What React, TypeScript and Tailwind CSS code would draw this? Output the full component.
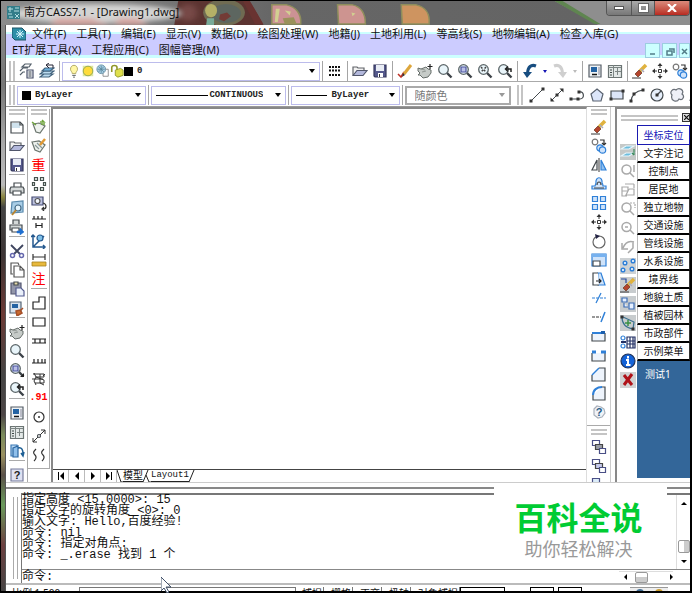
import React from "react";
import type { ReactNode } from "react";

const K = "#444a4e";
const B = "#2f80d8";
const L = "#cfe3fa";

function Svg({ children, w = 16, h = 16 }: { children: ReactNode; w?: number; h?: number }) {
  return (
    <svg width={w} height={h} viewBox={`0 0 ${w} ${h}`} fill="none" stroke={K} strokeWidth={1.2} aria-hidden="true" className="block shrink-0">
      {children}
    </svg>
  );
}

const lens = (
  <>
    <path d="M10 10l4.500 4.500" stroke="#3c4248" strokeWidth={2.4} />
    <circle cx="6.500" cy="6.500" r="4.800" fill="#e9f5fa" stroke="#5b6568" strokeWidth={1.300} />
  </>
);
const hand = (
  <>
    <path d="M1 5l3 1 5-2 2 2 3 1v3l-3 4-5 1-3-3H1l2-2-2-2z" fill="#c6cbc8" stroke="#676e6b" strokeWidth={1} />
    <path d="M4 6l4 1M5 9l4-1" stroke="#858c88" strokeWidth={0.800} />
  </>
);
const four = <path d="M13 1v5M10.500 3.500h5" stroke="#222" />;
const brush = (
  <>
    <path d="M14 2L8 8" stroke="#e0b23e" strokeWidth={3.500} />
    <path d="M9 6l3 3" stroke="#aab" strokeWidth={1.500} />
    <path d="M3 11l4-4 3 3-4 4z" fill="#b5442c" stroke="#71402c" strokeWidth={0.800} />
    <path d="M0 15h9" stroke="#555" />
  </>
);
const floppy = (
  <>
    <path d="M2 2h12v12H3l-1-1z" fill="#55598c" stroke="#34375c" />
    <path d="M4 2h8v6H4z" fill="#e8ecf4" stroke="none" />
    <path d="M6 10h5v4H6z" fill="#fff" stroke="none" />
    <path d="M7 11h1v3H7z" fill="#333" stroke="none" />
  </>
);
const folder = (
  <>
    <path d="M1 12V4h4l1 1h6v2" fill="#f2f2f2" stroke="#62656a" />
    <path d="M1 12.500l4-5h10l-4 5z" fill="#b3b8dc" stroke="#51566b" />
  </>
);
const palette = (
  <>
    <path d="M2 2h12v12H2z" fill="#eef2f5" stroke="#555d66" />
    <path d="M4 4h6v5H4z" fill="#2463a3" stroke="none" />
    <path d="M12 4v8" stroke="#99a" />
    <path d="M5 11.500h5" stroke="#111" strokeWidth={1.500} />
  </>
);
const design = (
  <>
    <path d="M1.500 2.500h13v12h-13z" fill="#e3e8e7" stroke="#6c7574" />
    <path d="M6.500 2v12M1 4.500h13M8 8.500h6M10.500 5v7" stroke="#7c8584" strokeWidth={1} />
    <path d="M3 7h2M3 9.500h2M3 12h2" stroke="#3a4443" />
  </>
);
const node = (x: number, y: number) => <rect x={x - 1.500} y={y - 1.500} width="3" height="3" fill="#333" stroke="none" />;
const moveIcon = (
  <>
    <path d="M8 0l2.500 3h-5zM8 16l2.500-3h-5zM0 8l3-2.500v5zM16 8l-3-2.500v5z" fill="#333" stroke="none" />
    <path d="M8 2v3M8 11v3M2 8h3M11 8h3M6.500 6.500h3v3h-3z" stroke="#333" strokeWidth={1} />
  </>
);
const copyIcon = (
  <>
    <circle cx="4" cy="4" r="2.800" fill="#fff" stroke="#777" />
    <path d="M9 2h4v4M11 5l2 2 2-2" stroke="#333" />
    <circle cx="9" cy="10" r="3.200" fill={L} stroke={B} />
    <circle cx="11.500" cy="12" r="3.200" fill={L} stroke={B} />
  </>
);
const zoomPrev = (
  <>
    {lens}
    <path d="M14 9V6H9M11 3.500L8.500 6 11 8.500" stroke="#222" strokeWidth={1.500} />
  </>
);
const zoomWin = (
  <>
    {lens}
    <path d="M4 4h5v5H4z" fill="#b9bfe8" stroke="#4b539b" />
  </>
);
const order = (a: string, b: string) => (
  <>
    <path d="M1.500 1.500h7v5h-7z" fill={a} stroke="#4a4f86" />
    <path d="M4.500 5.500h7v5h-7z" fill={b} stroke="#444" />
    <path d="M8.500 9.500h6v5h-6z" fill={a} stroke="#4a4f86" />
  </>
);

const icons: Record<string, ReactNode> = {
  layers: (
    <>
      <path d="M3 4l3-3h6l-2 3zM1 8l3-3h5M1 12l3-3h2" stroke="#55606b" />
      <path d="M8 7h6v8H8z" fill="#edf0f7" stroke="#495069" />
      <path d="M9.500 9h3M9.500 11h3M9.500 13h3" />
    </>
  ),
  layerPrev: (
    <>
      <path d="M1 14l4-3h9l-4 3zM1 11l4-3h10l-4 3z" fill="#bcdcf0" stroke="#42627c" />
      <path d="M3 8l3-3h9l-4 3z" fill="#6db0dc" stroke="#42627c" />
      <path d="M14 5V2H8M10 0L7 2l3 3" stroke="#223" strokeWidth={1} />
    </>
  ),
  linetype: <path d="M2 4h12M2 7.500h12M2 12h12" stroke="#111" strokeWidth={2} strokeDasharray="2 1" />,
  folder,
  floppy,
  pencil: (
    <>
      <path d="M1 11l3 3 3-5" stroke="#bd2f24" strokeWidth={1.500} />
      <path d="M14 2L7 11" stroke="#dda63c" strokeWidth={3} />
      <path d="M8 12l-3 2 1-4z" fill="#333" stroke="none" />
    </>
  ),
  pan: <>{hand}{four}</>,
  lens,
  zoomWin,
  zoomExt: <>{lens}<path d="M4 4l5 5M9 4L4 9" stroke="#444" strokeWidth={1.500} strokeDasharray="2 2" /></>,
  zoomPrev,
  undo: (
    <>
      <path d="M14 3C9 1 6 4 5.500 10" stroke="#174d80" strokeWidth={3} />
      <path d="M1 9h9l-5 6z" fill="#174d80" stroke="none" />
    </>
  ),
  redo: (
    <>
      <path d="M2 3c5-2 8 1 8.500 7" stroke="#cfcfcf" strokeWidth={3} />
      <path d="M6 9h9l-4 6z" fill="#cfcfcf" stroke="none" />
    </>
  ),
  palette,
  design,
  erase: brush,
  move: moveIcon,
  copy: copyIcon,
  line: <><path d="M2 14L14 2" strokeWidth={1} />{node(2, 14)}{node(14, 2)}</>,
  xline: <><path d="M2 14L14 2" strokeWidth={1} /><path d="M14.500 1.500v4l-4-4zM1.500 14.500v-4l4 4z" fill="#333" stroke="none" />{node(8, 8)}</>,
  pline: <><path d="M1 12h10c5 0 4-8 0-7" />{node(2, 12)}{node(9, 12)}{node(10, 5)}</>,
  polygon: <path d="M8 2l6 5-2 7H4L2 7z" fill="#dce6fa" stroke="#5a6370" />,
  rect: <><path d="M2 4h12v8H2z" fill="#dbe5f8" />{node(2, 12)}{node(14, 4)}</>,
  arc: <><path d="M2 14C3 7 7 4 14 3" />{node(2, 14)}{node(5, 7)}{node(14, 3)}</>,
  circle: <><circle cx="8" cy="8" r="6" fill="#e6effb" /><path d="M8 8l4-4" />{node(8, 8)}</>,
  cloud: <path d="M3 8c-3-3 1-7 4-5 3-3 9 0 6 4 3 2 1 7-3 5-2 4-9 2-7-4z" fill="#eef0f7" stroke="#6a7078" />,
  spline: <path d="M1 14C5 0 9 16 14 3" />,
  newDoc: (
    <>
      <path d="M2 3h9l3 3v8H2z" fill="#fff" />
      <path d="M3 4h8v5H3z" fill="#cfe2ed" stroke="none" />
      <path d="M11 3v3h3" />
    </>
  ),
  print: (
    <>
      <path d="M5 6V2h7v4" fill="#fff" />
      <path d="M2 6h12l1 2v4H1V8z" fill="#d6dada" />
      <path d="M4 10h8v4H4z" fill="#fff" />
    </>
  ),
  preview: (
    <>
      <path d="M3 2l11-1v11l-12 1z" fill="#a8cde6" stroke="#5788ab" />
      <circle cx="9" cy="8" r="3" fill="#e5f5fd" stroke="#456b86" />
      <path d="M7 10l-4 5" stroke="#b88431" strokeWidth={2} />
    </>
  ),
  plot: (
    <>
      <path d="M4 5V1h6v4M1 6h12v5H1z" fill="#d4d8d8" />
      <path d="M3 9h7v4H3z" fill="#fff" />
      <path d="M8 12h3v-3l4 4-4 3v-2H8z" fill="#1e6fd0" stroke="#1e6fd0" strokeWidth={0.500} />
    </>
  ),
  cut: (
    <>
      <path d="M2 2l9 9M14 2l-9 9" stroke="#3f4660" strokeWidth={1.800} />
      <circle cx="3.500" cy="12.500" r="2" stroke="#6668ad" strokeWidth={1.500} />
      <circle cx="12.500" cy="12.500" r="2" stroke="#6668ad" strokeWidth={1.500} />
    </>
  ),
  copyDoc: <path d="M4 12H2V1h7l1 2M5 4h6l4 4v7H5zM11 4v4h4" fill="#fff" stroke="#555" />,
  paste: (
    <>
      <path d="M2 2h10v11H2z" fill="#9296a9" stroke="#555972" />
      <path d="M5 1h4v3H5z" fill="#e3d8a8" />
      <path d="M7 7h5l3 3v5H7z" fill="#eaf0fa" stroke="#555c90" />
    </>
  ),
  match: (
    <>
      <path d="M1 2h11v11H1z" fill="#d8e4ef" stroke="#556575" />
      <path d="M3 4h6v4H3z" fill="#2463a3" stroke="none" />
      <path d="M14 8l-3 3M7 11l4-1 2 3-5 3z" fill="#ca6b30" stroke="#a75028" strokeWidth={1.500} />
    </>
  ),
  zoomDyn: <>{zoomWin}<path d="M11 15h4v-4z" fill="#222" stroke="none" /></>,
  tool: (
    <>
      <path d="M2 2h6v11H2z" fill="#b9d8f2" stroke="#3a78b5" />
      <path d="M4 5l5-2v11H4z" fill="#8fbfeb" stroke="#2b65a0" />
      <path d="M9 5c4-1 5 2 5 6M12 10l2 3 1-4" stroke="#1b5d93" strokeWidth={1.500} />
    </>
  ),
  tagRefresh: (
    <>
      <path d="M2 5l6-1 6 3-5 7-4-1z" fill="#eef2ee" stroke="#6b756e" />
      <path d="M1 3l4 3M9 3h4l-2-2M14 5h-4" stroke="#6fa53d" strokeWidth={1.500} />
    </>
  ),
  tagEdit: (
    <>
      <path d="M1 4l7-1 6 4-5 7-5-2z" fill="#eef2ee" stroke="#6b756e" />
      <path d="M4 7l4 4M6 5l5 5" stroke="#899" />
      <path d="M14 1L9 7" stroke="#e09a35" strokeWidth={2.500} />
    </>
  ),
  squares: <path d="M3.500 1.500h3v3h-3zM9.500 1.500h3v3h-3zM1.500 6.500h2v3h-2zM12.500 6.500h2v3h-2zM3.500 11.500h3v3h-3zM9.500 11.500h3v3h-3z" fill="#dfe8e4" stroke="#46524e" />,
  camera: (
    <>
      <path d="M1 2h11v8H1z" fill="#bcc2df" stroke="#454b72" />
      <circle cx="6.500" cy="6" r="2.500" fill="#f3f8ff" stroke="#555" />
      <path d="M12 8c4 1 4 6 0 6M13 12l-2 2 2 2" stroke="#333" />
    </>
  ),
  dist: <path d="M1 5h14M3 2v3M7 2v3M11 2v3M5 9v5M11 9v5M5 11.500h6" stroke="#222" />,
  axes: (
    <>
      <path d="M2 2v12h12M12 12l2 2-2 2M0 4l2-2 2 2M2 14L13 3" stroke="#24588e" strokeWidth={1.500} />
      <circle cx="9" cy="5" r="3" fill="#7fc0e8" stroke="#24588e" />
    </>
  ),
  ruler: (
    <>
      <path d="M2 2v6M14 2v6M2 5h12" stroke="#333" />
      <path d="M1 10h14v4H1z" fill="#e8b93c" stroke="#a5801f" strokeWidth={0.800} />
    </>
  ),
  step: <path d="M2 7h6V2h6v12H2z" stroke="#222" />,
  box: <path d="M2 4h12v8H2z" stroke="#222" />,
  rail: <path d="M1 6h14M1 10h14M4 6v4M9 6v4M14 6v4" stroke="#222" />,
  comb: <path d="M1 11h14M3 7v4M7 7v4M11 7v4M14 7v4" stroke="#222" />,
  knot: <path d="M2 3h11v3H5l8 3v3H4M3 2l2 4-2 4 2 4M12 5l2-2M9 3v9l4 2M1 8h11" stroke="#333" strokeWidth={1} />,
  target: <><circle cx="8" cy="8" r="5" stroke="#333" /><circle cx="8" cy="8" r="1" fill="#333" stroke="none" /></>,
  diag: <><path d="M2 14L14 2M10 2h4v4M2 10v4h4" stroke="#333" strokeWidth={1} /><circle cx="8" cy="8" r="1.500" fill="#fff" /></>,
  waves: <path d="M5 2c-3 3-3 4-1 6s1 4-1 6M13 2c-3 3-3 4-1 6s1 4-1 6" stroke="#333" />,
  help: (
    <>
      <path d="M2 2h12v12H2z" fill="#dfe1f2" stroke="#777c9c" />
      <text x="8" y="12" textAnchor="middle" fontSize="11" fontWeight="700" fill="#222" stroke="none" fontFamily="Liberation Sans">?</text>
    </>
  ),
  mirror: (
    <>
      <path d="M6 3v10H1z" fill="#fff" />
      <path d="M10 3v10h5z" fill="#8fc0f0" stroke={B} />
      <path d="M8 1v14" stroke="#555" />
    </>
  ),
  offset: (
    <>
      <path d="M1 13h14v-3h-3c0-1 0-2-1-3 1-7-7-7-6 0l-1 3H1z" fill={L} stroke={B} />
      <path d="M3 12h10M6 9c0-4 4-4 4 0" stroke="#444" />
    </>
  ),
  array: <path d="M1.500 1.500h5v5h-5zM9.500 1.500h5v5h-5zM1.500 9.500h5v5h-5zM9.500 9.500h5v5h-5z" fill={L} stroke={B} />,
  rotate: <><circle cx="8" cy="9" r="6" stroke="#666" /><path d="M4 1l5 2-4 3z" fill="#224" stroke="none" /></>,
  scale: (
    <>
      <path d="M1 2h14v12H1z" fill={L} stroke={B} />
      <path d="M1 2h14v3H1z" fill="#76b1ef" stroke="none" />
      <path d="M2 9h7v5H2z" fill="#fff" />
    </>
  ),
  stretch: (
    <>
      <path d="M7 2h3l4 12H7z" fill={L} stroke={B} />
      <path d="M7 2H2v12h6" fill="#fff" stroke={K} />
      <path d="M5 10h5M8 8l2 2-2 2" stroke="#222" />
    </>
  ),
  trim: <><path d="M1 8h6M9 8h6" stroke={B} strokeDasharray="3 1" /><path d="M5 13L10 3" stroke={B} /></>,
  extend: <><path d="M1 8h9" stroke="#333" strokeDasharray="3 1" /><path d="M10 13L14 3" stroke={B} strokeWidth={1.500} /></>,
  breakPt: <><path d="M14 5v8H1V6" fill="#eef4fc" /><path d="M1 5h13" stroke={B} strokeWidth={2} /><path d="M10 3h4v3h-4z" fill="#1c5fae" stroke="none" /></>,
  breakTwo: <><path d="M1 6v8h13V6" fill="#eef4fc" /><path d="M1 5h4M10 5h5" stroke={B} strokeWidth={3} /></>,
  chamfer: <><path d="M1 9v6h13V2H8" fill="#eef4fc" /><path d="M1 9l7-7" stroke={B} strokeWidth={1.500} /></>,
  fillet: <><path d="M2 10v5h12V2h-3" fill="#eef4fc" /><path d="M2 10c0-5 4-8 9-8" stroke={B} strokeWidth={2} /></>,
  explode: (
    <>
      <path d="M3 5l3-3 4 1 3 2 1 4-3 4-4 1-4-3z" fill="#f1f3f8" stroke="#aab1bb" />
      <text x="8" y="12" textAnchor="middle" fontSize="11" fontWeight="700" fill="#245b86" stroke="none" fontFamily="Liberation Sans">?</text>
    </>
  ),
  orderFront: order("#fff", "#9a9ea6"),
  orderBack: order("#fff", "#c5c9ea"),
  orderAbove: order("#dcedfa", "#c5c9ea"),
  pLayers: (
    <>
      <path d="M0 0h16v16H0z" fill="#c5c9c8" stroke="none" />
      <path d="M1 5l5-3h8l-5 3zM1 12l5-3h8l-5 3z" fill="#6cbcdc" stroke="#e7f6fb" />
      <path d="M14 5v6M12 9l2 2" stroke="#3d8a5c" />
    </>
  ),
  gZoom: <path d="M10 10l4 4M11 6.500a4.500 4.500 0 1 1-9 0 4.500 4.500 0 0 1 9 0M14 2v7" stroke="#a9a9a9" strokeWidth={1.500} />,
  gBox: <path d="M5 2h9M14 2v4M2 5h6v4H2zM9 7h5v6H6l3-6M2 9v5h5" stroke="#a9a9a9" />,
  gZoomWin: <><path d="M10 10l4 4M11 6.500a4.500 4.500 0 1 1-9 0 4.500 4.500 0 0 1 9 0" stroke="#a9a9a9" strokeWidth={1.500} /><path d="M10 2h5v5" stroke="#a9a9a9" strokeDasharray="2 1" /></>,
  gZoomIn: <path d="M10 10l4 4M11 7a4.500 4.500 0 1 1-9 0 4.500 4.500 0 0 1 9 0M5 7h3" stroke="#a9a9a9" strokeWidth={1.500} />,
  gUndo: <path d="M14 3C8 1 5 4 3 9M2 4v6h6M13 3v6l-5 5" stroke="#a9a9a9" strokeWidth={1.500} />,
  pDots: (
    <>
      <path d="M0 0h16v16H0z" fill="#ced2d4" stroke="none" />
      <g fill="#fff" stroke={B} strokeWidth={1.500}><circle cx="5" cy="5" r="1.800" /><circle cx="13" cy="3" r="1.800" /><circle cx="3" cy="12" r="1.800" /><circle cx="12" cy="11" r="1.800" /></g>
    </>
  ),
  pBrush: <><path d="M0 0h16v16H0z" fill="#c8ccce" stroke="none" /><path d="M1 2h5v4" stroke="#264a9c" />{brush}</>,
  pBlocks: <><path d="M0 0h16v16H0z" fill="#c8ccce" stroke="none" /><path d="M2 2h5v4H2zM9 7h5v6H9zM4 7v4h4" fill="#e5efff" stroke="#3c6db4" /></>,
  pNode: <><path d="M0 0h16v16H0z" fill="#c8ccce" stroke="none" /><path d="M2 2c0 8 5 11 11 12M3 2l11 5-1 7" stroke="#38708f" /><path d="M5 8h6M8 5v6" stroke="#3a9145" strokeWidth={1.500} />{node(2, 2)}{node(13, 14)}</>,
  pTable: <><path d="M7 3h8v11H7zM7 7h8M7 10h8M10 3v11M13 3v11" fill="#fff" stroke="#223064" /><circle cx="3" cy="4" r="2" stroke={B} /><circle cx="3" cy="12" r="2" stroke={B} /><path d="M1 8h5" stroke="#223064" strokeWidth={2} /></>,
  info: (
    <>
      <circle cx="8" cy="8" r="7" fill="#1463d8" stroke="#20345c" />
      <path d="M8 3v2.500M6 7h2v5M6 12h4.500" stroke="#fff" strokeWidth={2} />
    </>
  ),
  cross: <><path d="M0 0h16v16H0z" fill="#d2d2d2" stroke="none" /><path d="M4 3l8 10M12 2L4 13" stroke="#b01218" strokeWidth={3} /></>,
  bulb: <><path d="M4 6c0-6 8-6 8 0 0 2-2 3-2 5H6c0-2-2-3-2-5z" fill="#fff7a6" stroke="#a8a05c" /><path d="M6 13h4M7 15h2" /></>,
  sun: <><path d="M2 2h12v12H2z" fill="#dde6a0" stroke="none" /><circle cx="8" cy="8" r="5.500" fill="#ffdc3b" stroke="#89a14f" /></>,
  freeze: <><path d="M8 6h6v8H8z" fill="#fff" stroke="#888" /><circle cx="6" cy="6" r="5" fill="#a3cbe2" stroke="#6a92a6" /><path d="M2 6h8M6 2v8M3 3l6 6M9 3L3 9" stroke="#557f94" strokeWidth={0.800} /></>,
  lock: <><path d="M2 9V4c0-3 6-3 6 0v3" stroke="#8f9628" strokeWidth={1.800} /><path d="M6 7l6-2 3 2v6l-6 2-3-2z" fill="#dfdf4b" stroke="#8f9628" /></>,
};

type Entry = [string, string];

function IconButton({ entry, className }: { entry: Entry; className: string }) {
  const [name, label] = entry;
  const glyph = name.startsWith("text:") ? name.slice(5) : "";
  return (
    <button type="button" aria-label={label} title={label} className={`flex shrink-0 items-center justify-center ${className}`}>
      {glyph ? (
        <span className={glyph === ".91" ? "font-['Liberation_Mono',monospace] text-[10px] leading-none font-bold text-[#f00]" : "text-sm leading-none text-[#f00]"}>{glyph}</span>
      ) : (
        <Svg>{icons[name]}</Svg>
      )}
    </button>
  );
}

function HTools({ items }: { items: Entry[] }) {
  return (
    <div className="flex shrink-0">
      {items.map((e) => (
        <IconButton key={e[1]} entry={e} className="h-5 w-5" />
      ))}
    </div>
  );
}

function VTools({ groups }: { groups: Entry[][] }) {
  return (
    <div className="flex flex-col items-center">
      {groups.map((g, i) => (
        <div key={i} className={`flex flex-col items-center ${i ? "border-t border-[#aaa] pt-1" : ""}`}>
          {g.map((e) => (
            <IconButton key={e[1]} entry={e} className="h-[19px] w-4" />
          ))}
        </div>
      ))}
    </div>
  );
}

const VSep = () => <div className="mx-[2px] h-5 w-px shrink-0 bg-[#a5a5a5]" />;
const VGrip = () => <div className="h-5 w-[6px] shrink-0 border-x-2 border-[#c4c4c4]" />;
const HGrip = () => <div className="mx-auto my-[2px] h-[6px] w-4 shrink-0 border-y-2 border-[#c4c4c4]" />;

function Arrow({ className = "fill-black", d = "M0 0h6L3 4z", w = 6, h = 4 }: { className?: string; d?: string; w?: number; h?: number }) {
  return (
    <svg width={w} height={h} viewBox={`0 0 ${w} ${h}`} aria-hidden="true" className={`block shrink-0 ${className}`}>
      <path d={d} />
    </svg>
  );
}

function Drop({ label, value, className, lead, disabled = false, end = false }: { label: string; value: string; className: string; lead?: ReactNode; disabled?: boolean; end?: boolean }) {
  return (
    <label className={`flex h-[19px] min-w-0 items-center border pr-1 pl-1 ${disabled ? "border-2 border-[#aaa]" : "border-[#bcbcec]"} ${className}`}>
      {lead}
      <select
        aria-label={label}
        disabled={disabled}
        className={`min-w-0 flex-1 appearance-none bg-transparent leading-none outline-none ${disabled ? "text-[11px] text-[#777]" : "font-['Liberation_Mono',monospace] text-[9px] font-bold text-[#222]"} ${end ? "pr-3 text-right" : "pl-1"}`}
      >
        <option>{value}</option>
      </select>
      <Arrow className={disabled ? "fill-[#999]" : "fill-black"} />
    </label>
  );
}

const swatch = <span className="h-[9px] w-[9px] shrink-0 bg-black" />;
const stroke = (w: string) => <span className={`h-px shrink-0 bg-black ${w}`} />;

const menuTop = ["文件(F)", "工具(T)", "编辑(E)", "显示(V)", "数据(D)", "绘图处理(W)", "地籍(J)", "土地利用(L)", "等高线(S)", "地物编辑(A)", "检查入库(G)"];
const menuSub = ["ET扩展工具(X)", "工程应用(C)", "图幅管理(M)"];

const mainTools: Entry[][] = [
  [["newDoc", "新建"], ["folder", "打开"], ["floppy", "保存"]],
  [["print", "打印"], ["preview", "打印预览"], ["plot", "发布"]],
  [["cut", "剪切"], ["copyDoc", "复制"], ["paste", "粘贴"], ["match", "特性匹配"]],
  [["pan", "实时平移"], ["lens", "实时缩放"], ["zoomDyn", "窗口缩放"], ["zoomPrev", "缩放上一个"]],
  [["palette", "特性"], ["design", "设计中心"], ["tool", "工具选项板"]],
  [["help", "帮助"]],
];
const cassTools: Entry[][] = [
  [["tagRefresh", "查看编码"], ["tagEdit", "加入编码"], ["text:重", "重新生成"], ["squares", "批量选目标"], ["camera", "视图"], ["dist", "线型换向"], ["axes", "查询坐标"], ["ruler", "距离"], ["text:注", "注记"]],
  [["step", "多点房屋"], ["box", "四点房屋"], ["rail", "依比例围墙"], ["comb", "陡坎"], ["knot", "斜坡"], ["text:.91", "高程点"], ["target", "图根点"], ["diag", "直线"], ["waves", "曲线"]],
];
const modifyTools: Entry[][] = [
  [["erase", "删除"], ["copy", "复制对象"], ["mirror", "镜像"], ["offset", "偏移"], ["array", "阵列"], ["move", "移动"], ["rotate", "旋转"], ["scale", "比例"], ["stretch", "拉伸"], ["trim", "修剪"], ["extend", "延伸"], ["breakPt", "打断于点"], ["breakTwo", "打断"], ["chamfer", "倒角"], ["fillet", "圆角"], ["explode", "分解"]],
];
const orderTools: Entry[][] = [[["orderFront", "前置"], ["orderBack", "后置"], ["orderAbove", "置于对象之上"]]];
const sideTools: Entry[][] = [
  [["pLayers", "图层"], ["gZoom", "缩放"], ["gBox", "块"], ["gZoomWin", "窗口"], ["gZoomIn", "放大"], ["gUndo", "返回"], ["pDots", "点号"], ["pBrush", "刷新"], ["pBlocks", "图块"], ["pNode", "节点"], ["pTable", "属性表"], ["info", "信息"], ["cross", "取消"]],
];
const categories = ["坐标定位", "文字注记", "控制点", "居民地", "独立地物", "交通设施", "管线设施", "水系设施", "境界线", "地貌土质", "植被园林", "市政部件", "示例菜单"];
const history = ["指定高度 <15.0000>: 15", "指定文字的旋转角度 <0>: 0", "输入文字: Hello,百度经验!", "命令: nil", "命令: 指定对角点:", "命令: _.erase 找到 1 个"];

function TitleArt() {
  return (
    <svg aria-hidden="true" className="absolute inset-0 h-full w-full" viewBox="0 0 692 25" preserveAspectRatio="none">
      <defs>
        <linearGradient id="bar" gradientUnits="userSpaceOnUse" x1="0" x2="692" y1="0" y2="0"><stop offset="0" stopColor="#8c8c8c" /><stop offset="0.300" stopColor="#707070" /><stop offset="0.400" stopColor="#666" /><stop offset="0.850" stopColor="#646464" /><stop offset="1" stopColor="#999" /></linearGradient>
        <filter id="soft" x="-20%" y="-50%" width="140%" height="200%"><feGaussianBlur stdDeviation="3" /></filter>
      </defs>
      <path d="M0 0h692v25H0z" fill="url(#bar)" />
      <path d="M178 0h70l16 25h-90z" fill="#5c3431" />
      <g filter="url(#soft)">
        <ellipse cx="95" cy="13" rx="85" ry="10" fill="#d4d4d3" />
        <path d="M55 18h35l20 7H50zM118 18h20l10 7h-34z" fill="#d7a5a0" />
        <ellipse cx="188" cy="12" rx="9" ry="9" fill="#774a46" />
      </g>
      <ellipse cx="224" cy="12" rx="21" ry="14" fill="#6f6b52" />
      <ellipse cx="226" cy="13" rx="15" ry="10" fill="#5d6660" />
      <ellipse cx="211" cy="10" rx="6" ry="7" fill="#b5b067" />
      <path d="M220 14l7-2 4 4-7 5-5-2z" fill="#733b36" />
      <path d="M207 18h7v7h-8z" fill="#79aa98" />
      <path d="M243 0h7l14 24h-9z" fill="#693331" />
      <path d="M251 0h441v25H264z" fill="url(#bar)" />
      <g strokeWidth="1.500" stroke="#8e8e5c">
        <path d="M272 4h15c9 2 15 9 14 20h-29z" fill="#cc9294" />
        <path d="M338 4h15c9 2 13 9 13 20h-27z" fill="#cd9490" />
        <path d="M402 4h15c9 2 14 9 13 20h-27z" fill="#ce9460" />
      </g>
      <path d="M276 8h4l-2 14h-3zM285 10l6 1-1 4zM352 12l4 1-3 3z" fill="#d2cf91" />
      <path d="M283 18l11-1 3 7h-12z" fill="#9a915b" />
      <path d="M556 0h136v25h-92z" fill="#8e8e8e" />
      <path d="M556 0h8l38 24h-6z" fill="#5f8550" />
    </svg>
  );
}

export default function App() {
  return (
    <div className="flex h-screen flex-col overflow-hidden border-t border-r-2 border-b-2 border-l border-black bg-white font-['Noto_Sans','Noto_Sans_CJK_SC',sans-serif] text-[#111]">
      <header className="relative flex h-6 shrink-0 items-start overflow-hidden">
        <TitleArt />
        <div className="relative flex flex-1 items-center gap-1 pt-[2px] pl-[6px]">
          <svg width="13" height="13" viewBox="0 0 13 13" aria-hidden="true">
            <path d="M0 0h13v13H0z" fill="#337d89" />
            <path d="M1 3h5M3 1v5M8 2h4M7 5h5M1 8h4M2 11h4M8 8l4 4M12 8l-4 4" stroke="#b5e0e2" />
          </svg>
          <h1 className="text-[11px] leading-[18px] whitespace-nowrap text-[#111]">南方CASS7.1 - [Drawing1.dwg]</h1>
        </div>
        <div className="relative flex h-[15px] overflow-hidden rounded-b border border-t-0 border-[#555]">
          <button type="button" aria-label="最小化" className="flex w-6 items-center justify-center bg-linear-to-b from-[#aaa] to-[#777]">
            <span className="h-1 w-[10px] border border-[#555] bg-white" />
          </button>
          <button type="button" aria-label="最大化" className="flex w-6 items-center justify-center border-x border-[#555] bg-linear-to-b from-[#aaa] to-[#777]">
            <span className="h-2 w-[9px] border-2 border-white outline outline-[#666]" />
          </button>
          <button type="button" aria-label="关闭" className="flex w-[34px] items-center justify-center bg-linear-to-b from-[#d98a7c] to-[#b82820]">
            <svg width="10" height="8" viewBox="0 0 10 8" aria-hidden="true"><path d="M1 0l8 8M9 0L1 8" stroke="#fff" strokeWidth="2.200" /></svg>
          </button>
        </div>
      </header>

      <div className="flex min-h-0 flex-1">
        <div className="w-[5px] shrink-0 border-r border-[#555] bg-[linear-gradient(#888_0px,#777_60px,#aaa_120px,#bbb_160px,#8a8540_172px,#444_182px,#3c3434_230px,#6b3a35_290px,#444_350px,#4c4545_390px,#7a8b5c_410px,#9a9060_430px,#5a5048_450px,#6a9a5c_480px,#6c4040_520px,#444_568px)]" />
        <div className="flex min-w-0 flex-1 flex-col">
          <nav aria-label="菜单" className="flex shrink-0 bg-[linear-gradient(#fff_7px,#ccffff_7px,#ccffff_9px,#ccccff_9px,#ccccff_30px,#ccffff_30px)]">
            <div className="min-w-0 flex-1 pt-px pl-[6px] text-[11px] leading-4 whitespace-nowrap">
              <div className="flex items-center gap-[10px]">
                <svg width="14" height="14" viewBox="0 0 14 14" aria-hidden="true" className="-mr-1 shrink-0">
                  <path d="M0 1h10l4 4v8H3L0 10z" fill="#2d8fa8" stroke="#1d5265" />
                  <path d="M8 3v8M4 7h8M5 4l6 6M11 4l-6 6" stroke="#d8f6ff" />
                </svg>
                {menuTop.map((m) => <button key={m} type="button" className="shrink-0">{m}</button>)}
              </div>
              <div className="flex gap-[10px]">
                {menuSub.map((m) => <button key={m} type="button" className="shrink-0">{m}</button>)}
              </div>
            </div>
            <div className="flex shrink-0 items-end gap-[2px]">
              {[["最小化图形", "M3 9h5"], ["还原图形", "M5 4h5v4M3 6h5v4H3z"], ["关闭图形", "M3 4l5 5M8 4L3 9"]].map(([n, d], i) => (
                <button key={n} type="button" aria-label={n} className={`flex h-[15px] items-center justify-center border border-[#9dcde0] bg-[#ccffff] ${i === 2 ? "w-[11px]" : "w-[15px]"}`}>
                  <svg width="12" height="12" viewBox="0 0 12 12" fill="none" stroke="#527d88" strokeWidth="1.500" aria-hidden="true" className="shrink-0"><path d={d} /></svg>
                </button>
              ))}
            </div>
          </nav>

          <div className="flex h-6 shrink-0 items-center overflow-hidden border-b border-[#aaa] pt-1 pb-px pl-[3px]">
            <VGrip />
            <div className="ml-[2px] flex"><HTools items={[["layers", "图层特性管理器"], ["layerPrev", "上一个图层"]]} /></div>
            <VSep />
            <Drop
              label="图层"
              value="0"
              className="flex-1"
              lead={<span className="flex items-center"><span className="flex w-[57px] shrink-0 justify-between overflow-hidden">{["bulb", "sun", "freeze", "lock"].map((n) => <svg key={n} width="14" height="14" viewBox="0 0 16 16" fill="none" stroke={K} aria-hidden="true">{icons[n]}</svg>)}</span>{swatch}</span>}
            />
            <VSep />
            <HTools items={[["linetype", "线型"]]} />
            <VSep />
            <HTools items={[["folder", "打开"], ["floppy", "保存"]]} />
            <VSep />
            <HTools items={[["pencil", "编辑"], ["pan", "平移"], ["lens", "缩放"], ["zoomWin", "窗口缩放"], ["zoomExt", "范围缩放"], ["zoomPrev", "上一视图"]]} />
            <VSep />
            <HTools items={[["undo", "放弃"]]} />
            <button type="button" aria-label="放弃列表" className="flex w-[10px] justify-center"><Arrow className="fill-[#1414b4]" d="M0 0h4L2 3z" w={4} h={3} /></button>
            <HTools items={[["redo", "重做"]]} />
            <button type="button" aria-label="重做列表" className="flex w-[10px] justify-center"><Arrow className="fill-[#bbb]" d="M0 0h4L2 3z" w={4} h={3} /></button>
            <VSep />
            <HTools items={[["palette", "特性"], ["design", "设计中心"]]} />
            <VSep />
            <HTools items={[["erase", "删除"], ["move", "移动"], ["copy", "复制"]]} />
          </div>

          <div className="flex h-[25px] shrink-0 items-center overflow-hidden border-b border-[#999] pt-[2px] pl-[3px]">
            <VGrip />
            <Drop label="颜色" value="ByLayer" className="ml-[2px] flex-131" lead={swatch} />
            <VSep />
            <Drop label="线型" value="CONTINUOUS" className="flex-138" lead={stroke("w-[52px]")} end />
            <VSep />
            <Drop label="线宽" value="ByLayer" className="flex-108" lead={stroke("w-[31px]")} />
            <VSep />
            <Drop label="打印样式" value="随颜色" className="flex-104" disabled />
            <div className="mr-1 ml-[6px]"><VGrip /></div>
            <div className="flex w-[163px] shrink-0 overflow-hidden">
              <HTools items={[["line", "直线"], ["xline", "构造线"], ["pline", "多段线"], ["polygon", "正多边形"], ["rect", "矩形"], ["arc", "圆弧"], ["circle", "圆"], ["cloud", "修订云线"], ["spline", "样条曲线"]]} />
            </div>
          </div>

          <main className="flex min-h-0 flex-1 overflow-hidden border-b border-[#ccc]">
            <div className="w-[22px] shrink-0 border-r border-[#aaa]"><HGrip /><VTools groups={mainTools} /></div>
            <div className="w-[22px] shrink-0"><div className="border-r border-b border-[#aaa] pb-1"><HGrip /><VTools groups={cassTools} /></div></div>
            <section className="ml-px flex min-w-0 flex-1 flex-col border-t-2 border-r border-l-2 border-t-[#888] border-r-[#ddd] border-l-[#888]">
              <div role="img" aria-label="绘图区" className="flex-1" />
              <div className="flex h-[13px] shrink-0 items-stretch border-t border-[#444]">
                {[["首个布局", "M1 0h1v8H1zM7 0v8L3 4z"], ["上一布局", "M6 0v8L2 4z"], ["下一布局", "M2 0v8l4-4z"], ["末个布局", "M6 0h1v8H6zM1 0v8l4-4z"]].map(([n, d]) => (
                  <button key={n} type="button" aria-label={n} className="flex w-4 items-center justify-center border-r border-[#bbb]">
                    <Arrow d={d} w={8} h={8} />
                  </button>
                ))}
                <svg width="6" height="12" viewBox="0 0 6 12" aria-hidden="true"><path d="M0 0l4 12h2" stroke="#222" fill="none" /></svg>
                <button type="button" className="border-b border-[#222] text-[10px] leading-[11px]">模型</button>
                <svg width="8" height="12" viewBox="0 0 8 12" aria-hidden="true"><path d="M0 12L5 0M3 5l3 7h2" stroke="#222" fill="none" /></svg>
                <button type="button" className="border-b border-[#222] font-['Liberation_Mono',monospace] text-[9px] leading-[11px]">Layout1</button>
                <svg width="6" height="12" viewBox="0 0 6 12" aria-hidden="true"><path d="M0 12L5 0" stroke="#222" fill="none" /></svg>
              </div>
            </section>
            <div className="w-6 shrink-0 border-r border-[#ccc]">
              <HGrip />
              <VTools groups={modifyTools} />
              <div className="mt-1 border-t border-[#aaa] pt-px"><HGrip /><VTools groups={orderTools} /></div>
            </div>
            <aside className="ml-1 flex w-[75px] shrink-0 flex-col border-t-2 border-l-2 border-[#888] pl-[2px]">
              <div className="flex h-4 shrink-0 items-center gap-1 pt-px pl-[2px]">
                <div className="h-[6px] flex-1 border-y-2 border-[#c4c4c4]" />
                <button type="button" aria-label="关闭面板" className="flex h-[9px] w-2 items-center justify-center border border-[#333] bg-[#ddd]">
                  <svg width="5" height="5" viewBox="0 0 5 5" aria-hidden="true" className="shrink-0"><path d="M0 0l5 5M5 0L0 5" stroke="#111" strokeWidth="1.200" /></svg>
                </button>
              </div>
              <div className="flex min-h-0 flex-1">
                <div className="w-[18px] shrink-0 pt-[17px]"><VTools groups={sideTools} /></div>
                <div className="flex min-w-0 flex-1 flex-col pb-1">
                  {categories.map((c, i) => (
                    <button key={c} type="button" className={`shrink-0 border text-[10px] whitespace-nowrap ${i === 0 ? "h-5 border-[#1a1ab0] leading-[18px] text-[#1414b8]" : "h-[18px] border-t-0 border-r-[#333] border-b-2 border-l-[#bbb] border-b-black leading-4"}`}>{c}</button>
                  ))}
                  <div className="flex-1 bg-[#336699] px-2 pt-[7px] text-[10px] leading-3 text-white">测试1</div>
                </div>
              </div>
            </aside>
          </main>

          <section aria-label="命令窗口" className="mt-1 flex h-[98px] shrink-0 border-t-2 border-b-2 border-t-[#888] border-b-[#bbb] pt-1">
            <div className="mt-1 mb-1 ml-[7px] w-[5px] shrink-0 border-x border-[#aaa]" />
            <div className="ml-[3px] flex min-w-0 flex-1 flex-col border-t-2 border-l border-[#777]">
              <div className="flex h-[75px] shrink-0 border-b border-[#888]">
                <div className="min-w-0 flex-1 font-['Liberation_Mono','Noto_Sans_CJK_SC',monospace] text-[12px] leading-[11px] whitespace-pre">
                  {history.map((l) => <p key={l} className="h-[11px]">{l}</p>)}
                </div>
                <div className="flex w-[14px] shrink-0 flex-col items-center border-l border-[#ddd] py-1">
                  <button type="button" aria-label="向上滚动" className="flex h-2 w-3 items-center justify-center"><Arrow d="M0 3h6L3 0z" w={6} h={3} /></button>
                  <div className="flex-1" />
                  <div className="h-[13px] w-3 rounded-xs border border-[#999] bg-[linear-gradient(90deg,#fff_45%,#ccc_45%)]" />
                  <button type="button" aria-label="向下滚动" className="mt-1 flex h-2 w-3 items-center justify-center"><Arrow d="M0 0h6L3 3z" w={6} h={3} /></button>
                </div>
              </div>
              <div className="flex flex-1 items-center font-['Liberation_Mono','Noto_Sans_CJK_SC',monospace] text-[12px] leading-3">
                <label htmlFor="cmd">命令:</label>
                <input id="cmd" type="text" className="h-3 min-w-0 flex-1 outline-none" />
                <div className="mr-[17px] flex h-3 w-[54px] shrink-0 items-center justify-between border-t border-[#ddd]">
                  <button type="button" aria-label="向左滚动" className="flex w-3 justify-center"><Arrow d="M3 0v6L0 3z" w={3} h={6} /></button>
                  <div className="mr-[18px] h-[11px] w-[13px] rounded-xs border border-[#999] bg-[linear-gradient(#fff_45%,#ccc_45%)]" />
                  <button type="button" aria-label="向右滚动" className="flex w-1 justify-center"><Arrow d="M0 0v6l3-3z" w={3} h={6} /></button>
                </div>
              </div>
            </div>
          </section>

          <footer className="flex h-[6px] shrink-0 items-start overflow-hidden pt-[2px] pl-[6px] text-[10px] leading-3 whitespace-nowrap">
            <span className="w-[67px] shrink-0">比例 1:500</span>
            <div className="h-3 w-[217px] shrink border border-[#777]" />
            <div className="flex gap-[7px] pl-[6px]">
              {["捕捉", "栅格", "正交", "极轴", "对象捕捉"].map((t) => <button key={t} type="button" className="border-r border-[#777] pr-px">{t}</button>)}
            </div>
            <div className="h-3 w-[45px] border border-black" />
            <div className="ml-[25px] h-3 w-6 border border-black" />
            <div className="ml-1 h-3 w-6 border border-black" />
            <div className="mr-[22px] ml-auto flex h-3 w-[38px] justify-around border-t border-[#999] bg-[#eee]">
              <span className="mt-px h-2 w-2 rounded-full bg-[#3f6c94]" />
              <span className="mt-px h-2 w-2 rounded-full bg-[#c89a2c]" />
            </div>
          </footer>
        </div>
      </div>

      <div className="absolute right-[25px] bottom-[26px] flex h-[83px] w-[173px] flex-col items-center bg-white pt-4 pr-1">
        <strong className="text-[32px] leading-9 font-bold text-[#00cc33]">百科全说</strong>
        <span className="text-[18px] leading-[26px] text-[#999]">助你轻松解决</span>
      </div>
      <svg width="11" height="16" viewBox="0 0 11 16" aria-hidden="true" className="absolute bottom-0 left-[161px]">
        <path d="M0 0v14l3-3 3 5 2-1-3-5h5z" fill="#fff" stroke="#42526b" />
      </svg>
    </div>
  );
}
